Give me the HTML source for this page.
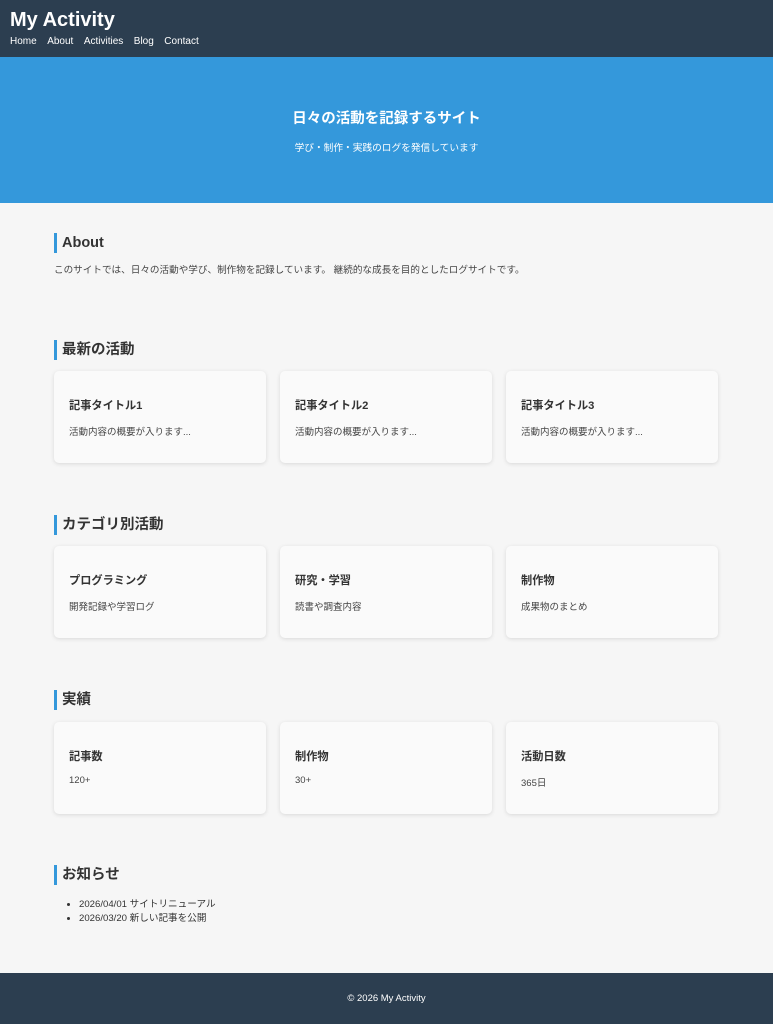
<!DOCTYPE html><html><head><meta charset="utf-8"><style>
*{margin:0;padding:0;box-sizing:border-box}
body{width:773px;height:1024px;background:#f6f6f6;font-family:"Liberation Sans","Noto Sans CJK JP",sans-serif;color:#333;position:relative;overflow:hidden}
header{position:absolute;top:0;left:0;width:773px;height:57px;background:#2c3e50;color:#fff}
header h1{position:absolute;left:10px;top:8px;font-size:20px;font-weight:bold;line-height:24px}
nav{position:absolute;left:10px;top:36px;font-size:10px;line-height:12px}
nav span{margin-right:10.5px}
.hero{position:absolute;top:57px;left:0;width:773px;height:146px;background:#3498db;color:#fff;text-align:center}
.hero h2{position:absolute;top:52px;width:100%;font-size:14.5px;line-height:20px;font-weight:bold}
.hero p{position:absolute;top:85px;width:100%;font-size:9.7px;line-height:14px}
.h{position:absolute;left:54px;border-left:3px solid #3498db;padding-left:5px;font-size:14.5px;font-weight:bold;line-height:20px;color:#333}
.t{position:absolute;font-size:9.6px;line-height:14px;color:#444}
.card{position:absolute;width:212px;height:92px;background:#fafafa;border-radius:5px;box-shadow:0 1px 4px rgba(0,0,0,.12)}
.card b{position:absolute;left:15px;top:27px;font-size:11.2px;line-height:16px}
.card span{position:absolute;left:15px;top:55px;font-size:9.5px;line-height:14px;color:#444}
footer{position:absolute;top:973px;left:0;width:773px;height:51px;background:#2c3e50;color:#fff;font-size:9.5px;text-align:center;line-height:51px}
ul{position:absolute;left:79px;top:898px;font-size:9.6px;line-height:14px;color:#333}
</style></head><body>
<header><h1>My Activity</h1><nav><span>Home</span><span>About</span><span>Activities</span><span>Blog</span><span>Contact</span></nav></header>
<div class="hero"><h2>日々の活動を記録するサイト</h2><p>学び・制作・実践のログを発信しています</p></div>
<div class="h" style="top:233px">About</div>
<div class="t" style="left:54px;top:264px">このサイトでは、日々の活動や学び、制作物を記録しています。 継続的な成長を目的としたログサイトです。</div>
<div class="h" style="top:340px">最新の活動</div>
<div class="card" style="left:54px;top:371px"><b>記事タイトル1</b><span>活動内容の概要が入ります...</span></div>
<div class="card" style="left:280px;top:371px"><b>記事タイトル2</b><span>活動内容の概要が入ります...</span></div>
<div class="card" style="left:506px;top:371px"><b>記事タイトル3</b><span>活動内容の概要が入ります...</span></div>
<div class="h" style="top:515px">カテゴリ別活動</div>
<div class="card" style="left:54px;top:546px"><b>プログラミング</b><span>開発記録や学習ログ</span></div>
<div class="card" style="left:280px;top:546px"><b>研究・学習</b><span>読書や調査内容</span></div>
<div class="card" style="left:506px;top:546px"><b>制作物</b><span>成果物のまとめ</span></div>
<div class="h" style="top:690px">実績</div>
<div class="card" style="left:54px;top:722px"><b>記事数</b><span style="top:52px">120+</span></div>
<div class="card" style="left:280px;top:722px"><b>制作物</b><span style="top:52px">30+</span></div>
<div class="card" style="left:506px;top:722px"><b>活動日数</b><span>365日</span></div>
<div class="h" style="top:865px">お知らせ</div>
<ul><li>2026/04/01 サイトリニューアル</li><li>2026/03/20 新しい記事を公開</li></ul>
<footer>© 2026 My Activity</footer>
</body></html>
